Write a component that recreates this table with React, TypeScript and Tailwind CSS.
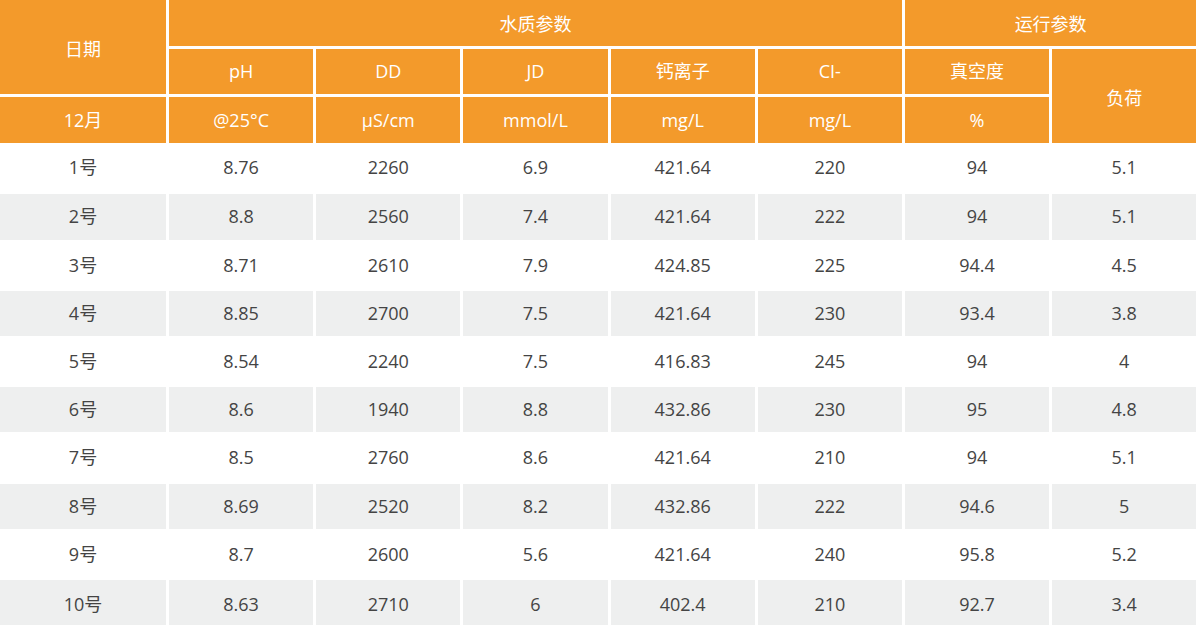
import React from "react";

const rows: string[][] = [
  ["1号", "8.76", "2260", "6.9", "421.64", "220", "94", "5.1"],
  ["2号", "8.8", "2560", "7.4", "421.64", "222", "94", "5.1"],
  ["3号", "8.71", "2610", "7.9", "424.85", "225", "94.4", "4.5"],
  ["4号", "8.85", "2700", "7.5", "421.64", "230", "93.4", "3.8"],
  ["5号", "8.54", "2240", "7.5", "416.83", "245", "94", "4"],
  ["6号", "8.6", "1940", "8.8", "432.86", "230", "95", "4.8"],
  ["7号", "8.5", "2760", "8.6", "421.64", "210", "94", "5.1"],
  ["8号", "8.69", "2520", "8.2", "432.86", "222", "94.6", "5"],
  ["9号", "8.7", "2600", "5.6", "421.64", "240", "95.8", "5.2"],
  ["10号", "8.63", "2710", "6", "402.4", "210", "92.7", "3.4"],
];

const H = "bg-[#f39a2b] text-white flex items-center justify-center";

export default function App() {
  return (
    <div
      className="w-[1200px] h-[625px] overflow-hidden bg-white text-[18px]"
      style={{ fontFamily: '"Open Sans", "Noto Sans CJK SC", sans-serif' }}
    >
      <div className="grid grid-cols-[166px_repeat(7,144.2px)] grid-rows-[45.5px_45.7px_46px_repeat(9,45.2px)_49px] gap-[3px]">
        <div className={`${H} row-span-2 pt-[5px]`}>日期</div>
        <div className={`${H} col-span-5 pt-[3px]`}>水质参数</div>
        <div className={`${H} col-span-2 pt-[3px]`}>运行参数</div>
        <div className={H}>pH</div>
        <div className={H}>DD</div>
        <div className={H}>JD</div>
        <div className={H}>钙离子</div>
        <div className={H}>CI-</div>
        <div className={H}>真空度</div>
        <div className={`${H} row-span-2 pt-[5px]`}>负荷</div>
        <div className={H}>12月</div>
        <div className={H}>@25°C</div>
        <div className={H}>μS/cm</div>
        <div className={H}>mmol/L</div>
        <div className={H}>mg/L</div>
        <div className={H}>mg/L</div>
        <div className={H}>%</div>
        {rows.map((r, i) =>
          r.map((c, j) => (
            <div
              key={`${i}-${j}`}
              className={`flex items-center justify-center text-[#444444] ${
                i % 2 === 1 ? "bg-[#eeefef]" : "bg-white"
              } ${i === 0 ? "pb-[2px]" : ""}`}
            >
              {c}
            </div>
          ))
        )}
      </div>
    </div>
  );
}
